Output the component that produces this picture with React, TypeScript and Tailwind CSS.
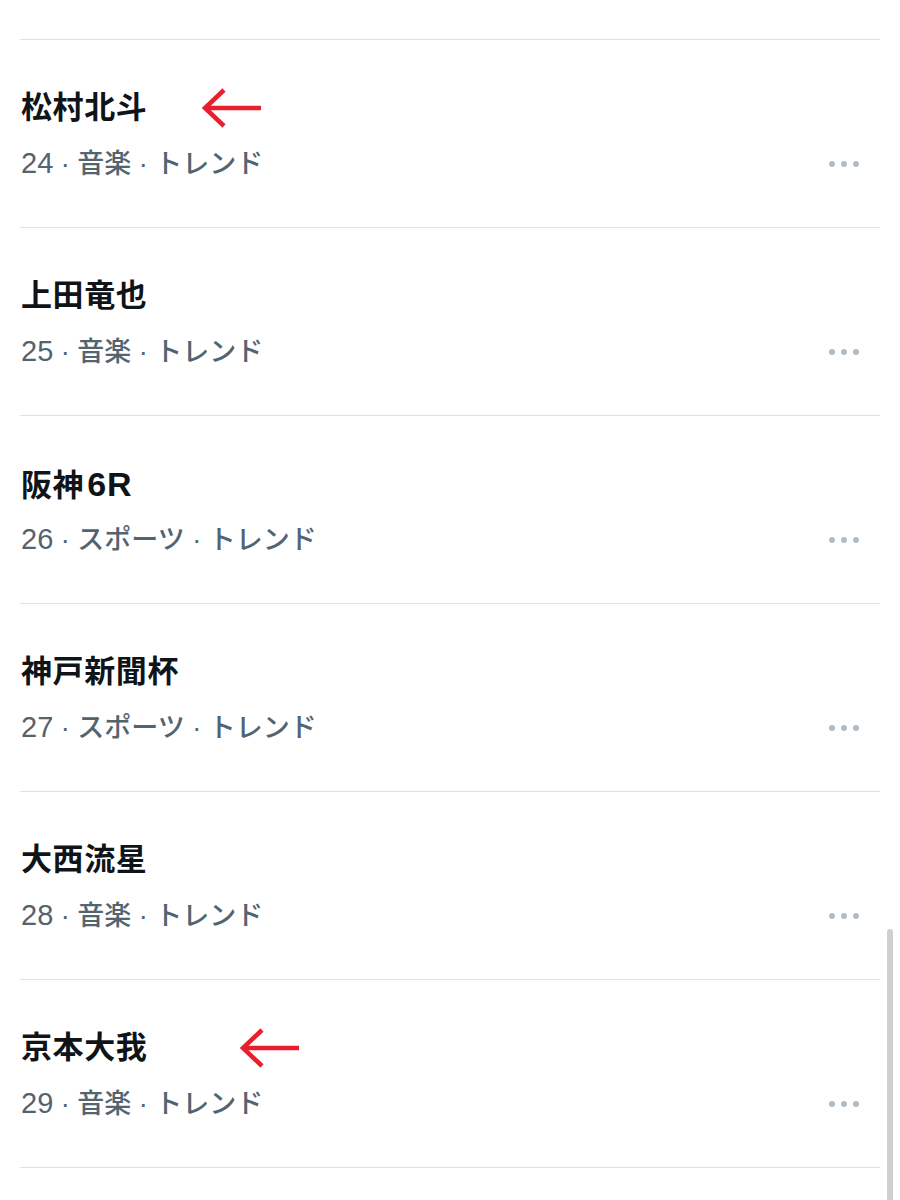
import React from "react";

const rows: { title: React.ReactNode; rank: string; sub: string; arrow?: number }[] = [
  { title: "松村北斗", rank: "24", sub: " · 音楽 · トレンド", arrow: 200 },
  { title: "上田竜也", rank: "25", sub: " · 音楽 · トレンド" },
  {
    title: (
      <>
        阪神<span className="text-[34px] ml-[3px] tracking-[1px]">6R</span>
      </>
    ),
    rank: "26",
    sub: " · スポーツ · トレンド",
  },
  { title: "神戸新聞杯", rank: "27", sub: " · スポーツ · トレンド" },
  { title: "大西流星", rank: "28", sub: " · 音楽 · トレンド" },
  { title: "京本大我", rank: "29", sub: " · 音楽 · トレンド", arrow: 238 },
];

function Arrow({ left }: { left: number }) {
  return (
    <svg
      className="absolute top-1/2 -translate-y-1/2"
      style={{ left: left - 21 }}
      width="62"
      height="42"
      viewBox="0 0 62 42"
    >
      <path d="M61 21 H5" stroke="#e8202e" strokeWidth="4.5" fill="none" />
      <path d="M24 3 L5 21 L24 39" stroke="#e8202e" strokeWidth="4.5" fill="none" strokeLinejoin="miter" />
    </svg>
  );
}

export default function App() {
  return (
    <div
      className="relative w-[900px] h-[1200px] bg-white overflow-hidden"
      style={{ fontFamily: '"Liberation Sans", "Noto Sans CJK JP", sans-serif' }}
    >
      <div className="pt-[39px] px-5">
        {rows.map((r, i) => (
          <div key={i} className="border-t border-[#e1e1e1] h-[188px] relative">
            <div className="pl-[1px] pt-[48px]">
              <div className="relative h-[40px] text-[31px] leading-[40px] font-bold text-[#0f1419] tracking-[0.6px]">
                <span>{r.title}</span>
                {r.arrow && <Arrow left={r.arrow} />}
              </div>
              <div className="mt-[17px] flex items-center justify-between leading-[36px] text-[#536471]">
                <span className="text-[27px] font-medium whitespace-pre">
                  <span className="text-[29px]">{r.rank}</span>
                  {r.sub}
                </span>
                <div className="flex gap-[6px] mr-[21px]">
                  <span className="w-[6px] h-[6px] rounded-full bg-[#b0bcc5]" />
                  <span className="w-[6px] h-[6px] rounded-full bg-[#b0bcc5]" />
                  <span className="w-[6px] h-[6px] rounded-full bg-[#b0bcc5]" />
                </div>
              </div>
            </div>
          </div>
        ))}
        <div className="border-t border-[#e1e1e1]" />
      </div>
      <div className="absolute left-[887px] top-[929px] w-[6px] h-[280px] rounded-t-full bg-[#cfcfcf]" />
    </div>
  );
}
